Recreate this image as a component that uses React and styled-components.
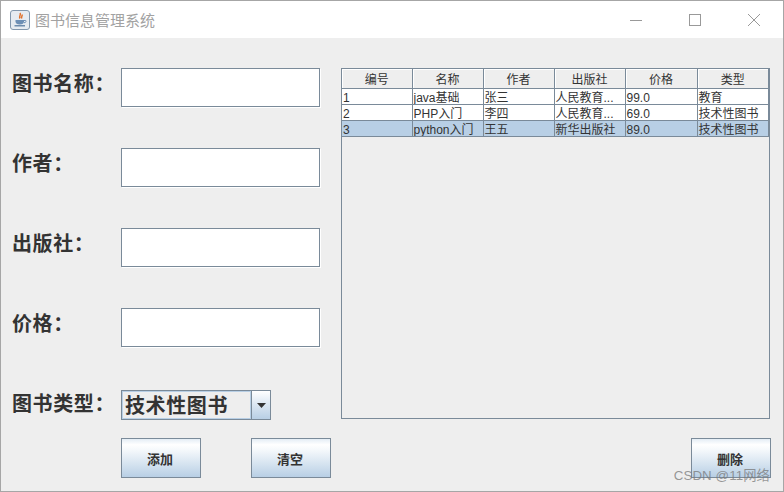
import React from "react";
import styled, { createGlobalStyle } from "styled-components";

const Global = createGlobalStyle`
  html, body { margin: 0; padding: 0; background: #fff; }
  * { box-sizing: border-box; }
  body { font-family: "Noto Sans CJK SC", "Liberation Sans", sans-serif; }
`;

const Win = styled.div`
  width: 784px; height: 492px; display: flex; flex-direction: column;
  border: 1px solid #a6a6a6; background: #eeeeee; overflow: hidden; position: relative;
`;
const TitleBar = styled.div`
  height: 37px; flex: none; background: #fff; display: flex; align-items: center; padding-left: 9px;
`;
const AppIcon = styled.svg` width: 20px; height: 20px; flex: none; margin-right: 5px; `;
const Title = styled.div` font-size: 15px; color: #a2a2a2; line-height: 20px; `;
const WinButtons = styled.div` margin-left: auto; display: flex; `;
const WinButton = styled.div`
  width: 59px; height: 37px; display: flex; align-items: center; justify-content: center;
  svg { width: 14px; height: 14px; }
`;
const Content = styled.div`
  flex: 1; display: flex; flex-direction: column; padding: 30px 12px 12px 11px;
`;
const Main = styled.div` display: flex; flex: none; height: 352px; `;
const Form = styled.div` width: 329px; flex: none; display: flex; flex-direction: column; `;
const Row = styled.div` height: 80px; flex: none; display: flex; align-items: flex-start; `;
const Label = styled.div`
  width: 109px; height: 30px; flex: none; font-size: 20px; font-weight: 700; letter-spacing: 0.6px; color: #333;
  line-height: 30px; white-space: nowrap;
`;
const Input = styled.div`
  width: 199px; height: 39px; background: #fff; border: 1px solid #7a8a99; box-shadow: 1px 1px 0 #fff;
`;
const Combo = styled.div` display: flex; width: 150px; height: 30px; margin-top: 2px; border: 1px solid #7a8a99; `;
const ComboValue = styled.div`
  flex: 1; background: #eee; border: 1px solid #b8cfe5; font-size: 20px; font-weight: 700;
  letter-spacing: 0.6px; color: #333; line-height: 26px; padding-left: 2px; white-space: nowrap; overflow: hidden;
`;
const ComboArrow = styled.div`
  width: 19px; flex: none; border-left: 1px solid #7a8a99; display: flex; align-items: center; justify-content: center;
  background: linear-gradient(#fff, #dde8f3 45%, #b8cfe5);
  svg { width: 9px; height: 5px; }
`;
const TablePanel = styled.div` width: 429px; height: 351px; border: 1px solid #7a8a99; background: #eee; `;
const Table = styled.table`
  border-collapse: collapse; table-layout: fixed; width: 427px; font-size: 12px; color: #333;
  font-family: "Liberation Sans", "Noto Sans CJK SC", sans-serif;
`;
const Th = styled.th`
  height: 19px; padding: 4px 0 0; font-weight: 400; text-align: center; background: #eee; line-height: 14px;
  border-right: 1px solid #7a8a99; border-bottom: 1px solid #7a8a99; overflow: hidden;
  box-shadow: inset 1px 1px 0 #fff;
  &:last-child { border-right: 2px solid #7a8a99; }
`;
const Td = styled.td`
  height: 16px; padding: 3px 0 0 1px; line-height: 12px; white-space: nowrap; overflow: hidden;
  border-right: 1px solid #7a8a99; border-bottom: 1px solid #7a8a99; background: ${p => (p.$selected ? "#b8cfe5" : "#fff")};
  &:last-child { border-right: 2px solid #7a8a99; }
`;
const Footer = styled.div` display: flex; gap: 50px; padding-left: 109px; margin-top: 18px; `;
const Button = styled.div`
  width: 80px; height: 40px; border: 1px solid #7a8a99; display: flex; align-items: center; justify-content: center;
  font-size: 13px; font-weight: 700; color: #333; padding-right: 2px;
  background: linear-gradient(#e4edf5, #fff 15%, #f4f8fb 30%, #b8cfe5);
  ${p => p.$end && "margin-left: auto;"}
`;
const Watermark = styled.div`
  position: absolute; right: 13px; bottom: 6px; font-family: "Liberation Sans", "Noto Sans CJK SC", sans-serif;
  font-size: 13.3px; letter-spacing: 0.1px; color: rgba(120, 120, 120, 0.75); line-height: 18px;
`;

const columns = ["编号", "名称", "作者", "出版社", "价格", "类型"];
const widths = [70, 71, 71, 71, 72, 72];
const rows = [
  ["1", "java基础", "张三", "人民教育...", "99.0", "教育"],
  ["2", "PHP入门", "李四", "人民教育...", "69.0", "技术性图书"],
  ["3", "python入门", "王五", "新华出版社", "89.0", "技术性图书"],
];
const fields = ["图书名称：", "作者：", "出版社：", "价格："];

export default function App() {
  return (
    <>
      <Global />
      <Win>
        <TitleBar>
          <AppIcon viewBox="0 0 20 20">
            <rect x="0.5" y="0.5" width="19" height="19" rx="2.5" fill="#e6ebf1" stroke="#8297ad" />
            <path d="M10 3c1.5 2-1.5 3 0 5.5M12 4.5c.8 1.5-1.2 2.2-.2 4" fill="none" stroke="#e0702a" strokeWidth="1.5" />
            <path d="M5.5 10h8.5v1.6c0 1.8-1.6 2.9-4.2 2.9s-4.3-1.1-4.3-2.9z" fill="#6d8fb5" />
            <path d="M14 10.5h1.6c.9 0 .9 2-1.6 2.3" fill="none" stroke="#6d8fb5" />
            <path d="M4.5 15.8h10.5" stroke="#4f749e" strokeWidth="1.2" />
          </AppIcon>
          <Title>图书信息管理系统</Title>
          <WinButtons>
            <WinButton>
              <svg viewBox="0 0 14 14"><path d="M1 7.5h12" stroke="#999" strokeWidth="1" /></svg>
            </WinButton>
            <WinButton>
              <svg viewBox="0 0 14 14"><rect x="1.5" y="1.5" width="11" height="11" fill="none" stroke="#999" /></svg>
            </WinButton>
            <WinButton>
              <svg viewBox="0 0 14 14"><path d="M1 1l12 12M13 1L1 13" stroke="#999" strokeWidth="1" /></svg>
            </WinButton>
          </WinButtons>
        </TitleBar>
        <Content>
          <Main>
            <Form>
              {fields.map(f => (
                <Row key={f}>
                  <Label>{f}</Label>
                  <Input />
                </Row>
              ))}
              <Row>
                <Label>图书类型：</Label>
                <Combo>
                  <ComboValue>技术性图书</ComboValue>
                  <ComboArrow>
                    <svg viewBox="0 0 9 5"><path d="M0 0h9L4.5 5z" fill="#333" /></svg>
                  </ComboArrow>
                </Combo>
              </Row>
            </Form>
            <TablePanel>
              <Table>
                <colgroup>
                  {widths.map((w, i) => <col key={i} style={{ width: w }} />)}
                </colgroup>
                <thead>
                  <tr>{columns.map(c => <Th key={c}>{c}</Th>)}</tr>
                </thead>
                <tbody>
                  {rows.map((r, i) => (
                    <tr key={i}>
                      {r.map((c, j) => <Td key={j} $selected={i === 2}>{c}</Td>)}
                    </tr>
                  ))}
                </tbody>
              </Table>
            </TablePanel>
          </Main>
          <Footer>
            <Button>添加</Button>
            <Button>清空</Button>
            <Button $end>删除</Button>
          </Footer>
        </Content>
        <Watermark>CSDN @11网络</Watermark>
      </Win>
    </>
  );
}
